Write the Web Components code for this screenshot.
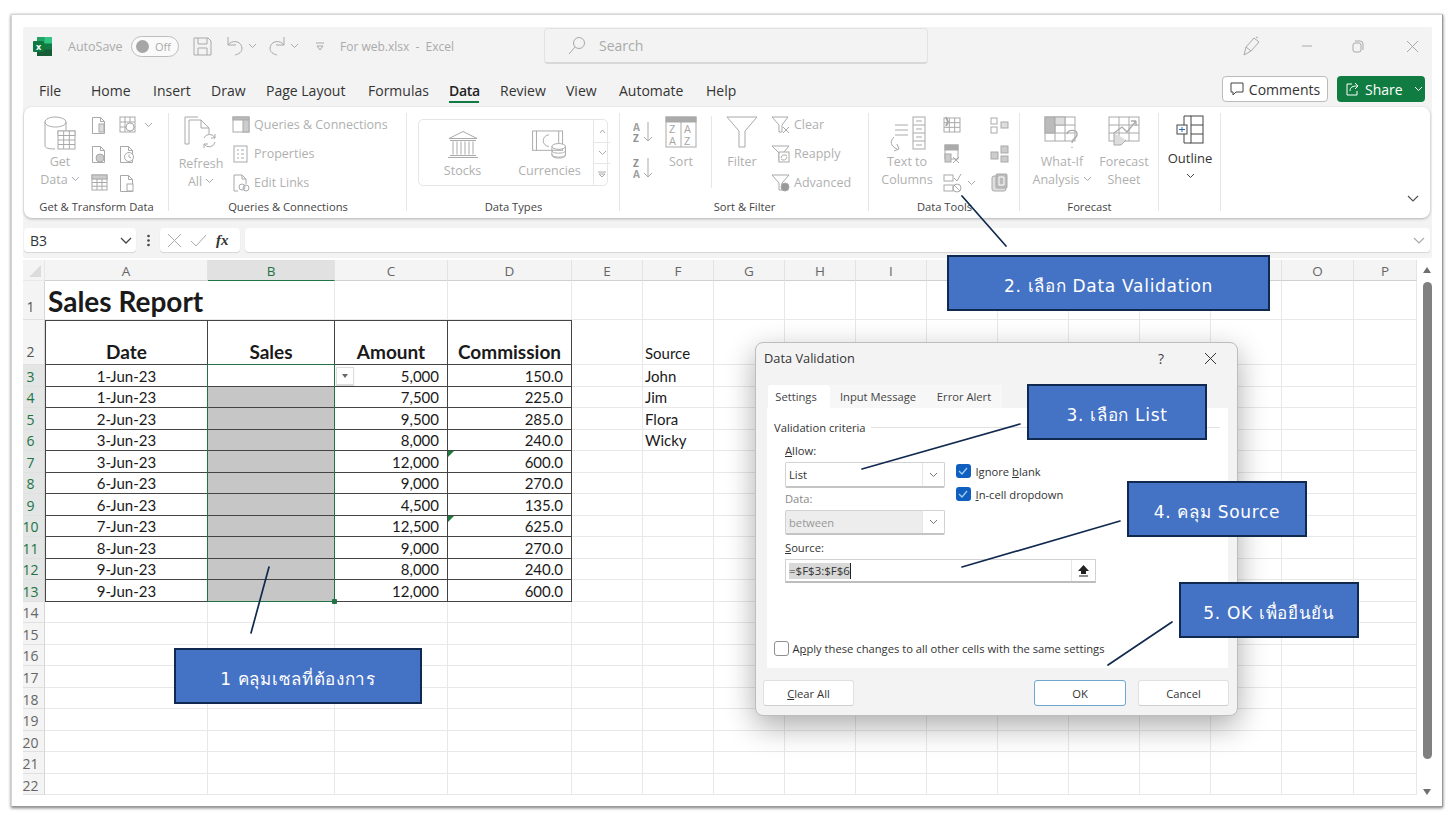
<!DOCTYPE html>
<html lang="th"><head><meta charset="utf-8"><title>Data Validation</title>
<style>
html,body{margin:0;padding:0;background:#fff;overflow:hidden;height:817px}
body{font-family:"Open Sans","Noto Sans",sans-serif;padding:14px 8px 0 11px;box-sizing:border-box}
</style></head><body>
<x-window>
  <x-titlebar slot="title"></x-titlebar>
  <x-tabs slot="tabs"></x-tabs>
  <x-ribbon slot="ribbon"></x-ribbon>
  <x-formula slot="formula"></x-formula>
  <x-sheet slot="sheet"></x-sheet>
</x-window>
<x-dialog></x-dialog>
<x-lines></x-lines>
<x-callout style="left:174px;top:648px;width:248px;height:56px">1 คลุมเซลที่ต้องการ</x-callout>
<x-callout style="left:947px;top:255px;width:323px;height:56px">2. เลือก Data Validation</x-callout>
<x-callout style="left:1027px;top:384px;width:180px;height:56px">3. เลือก List</x-callout>
<x-callout style="left:1127px;top:481px;width:180px;height:56px">4. คลุม Source</x-callout>
<x-callout style="left:1179px;top:582px;width:180px;height:56px">5. OK เพื่อยืนยัน</x-callout>
<script>
const G='#a9a9a9';
const grid=(x,y,w,h,cols,rows,extra='')=>{let s=`<rect x="${x}" y="${y}" width="${w}" height="${h}" ${extra}/>`;
 for(let i=1;i<cols;i++){const p=x+w*i/cols;s+=`<path d="M${p} ${y}v${h}"/>`}
 for(let i=1;i<rows;i++){const p=y+h*i/rows;s+=`<path d="M${x} ${p}h${w}"/>`}return s};
const doc='<path d="M1.5 1.5h8l4 4v12h-12z"/><path d="M9.5 1.5v4h4"/>';
const lt=(x,y,t,s=10,f='#a0a0a0',w=700)=>`<text x="${x}" y="${y}" font-size="${s}" fill="${f}" stroke="none" font-family="Open Sans" font-weight="${w}">${t}</text>`;
const ICONS={
 get:[32,36,`<path d="M1 6C1 3 6 1 11 1s11 2 11 5v8M1 6c0 3 5 5 10.500 5S22 9 22 6M1 6v24c0 2 4 3 10 3"/><rect x="14" y="15" width="17" height="4" fill="#bbb"/>${grid(14,15,17,18,3,4,'fill="#fff"')}`],
 d1:[18,18,`${doc}<rect x="8" y="8" width="5" height="8" fill="#ddd"/>`],
 d2:[20,18,`${grid(1,1,15,15,3,3,'fill="#fff"')}<circle cx="11" cy="11" r="4" fill="#fff"/>`],
 d3:[18,18,`${doc}<circle cx="9" cy="13" r="4" fill="#ccc"/>`],
 d4:[18,18,`${doc}<circle cx="10" cy="12" r="4.500" fill="#fff"/><path d="M10 9.500V12l2 1"/>`],
 d5:[18,18,`${grid(1,1,15,15,3,4,'fill="#fff"')}<rect x="1" y="1" width="15" height="4" fill="#ccc"/>`],
 d6:[18,18,`${doc}<rect x="8" y="10" width="6" height="7" fill="#fff"/>`],
 refresh:[34,36,`<path d="M5 28H1V1h13"/><path d="M5 28V4h12l8 8v6"/><path d="M17 4v8h8"/><path d="M20 22a6 6 0 0 1 11 0M31 26a6 6 0 0 1-11 2"/><path d="M31 18v4h-4M20 32v-4h4"/>`],
 q:[18,18,`${grid(1,1,16,15,1,1,'fill="#fff"')}<rect x="1" y="1" width="16" height="3" fill="#bbb"/><rect x="11" y="4" width="6" height="12" fill="#ccc"/>`],
 prop:[18,18,`<rect x="2" y="1" width="13" height="16"/><path d="M5 5h2M5 9h2M5 13h2M9 5h3M9 9h3M9 13h3"/>`],
 link:[18,18,`<path d="M6 17H2V1h8l4 4v5"/><path d="M10 1v4h4"/><circle cx="10" cy="13" r="3"/><circle cx="14" cy="14" r="3"/>`],
 bank:[32,28,`<path d="M2 8L16 1l14 7z"/><path d="M3 10h26M3 25h26M1 27h30M6 11v13M10 11v13M14 11v13M18 11v13M22 11v13M26 11v13"/>`],
 cur:[38,30,`<rect x="1" y="1" width="31" height="20"/><path d="M5 1v20M28 1v20"/><path d="M18 5a6 6 0 1 0 0 12"/><ellipse cx="28" cy="17" rx="7" ry="3" fill="#fff"/><path d="M21 17v9c0 2 3 3 7 3s7-1 7-3v-9M21 21c0 2 3 3 7 3s7-1 7-3M21 25c0 2 3 3 7 3s7-1 7-3"/>`],
 az:[21,24,`${lt(0,10,'A')}${lt(0,21,'Z',10,'#909090')}<path d="M15 1v19M11 16l4 4 4-4"/>`],
 za:[21,24,`${lt(0,10,'Z',10,'#909090')}${lt(0,21,'A')}<path d="M15 1v19M11 16l4 4 4-4"/>`],
 sort:[32,32,`<rect x="1" y="1" width="30" height="30"/><rect x="1" y="1" width="30" height="5" fill="#aaa"/><path d="M16 6v25"/>${lt(4,17,'Z',11,'#a6a6a6',400)}${lt(19,17,'A',11,'#a6a6a6',400)}${lt(4,29,'A',11,'#a6a6a6',400)}${lt(19,29,'Z',11,'#a6a6a6',400)}`],
 filter:[32,32,`<path d="M1 1h30L19 15v16h-6V15z"/>`],
 clear:[20,18,`<path d="M1 1h16L11 9v7H8V9z"/><path d="M12 11l6 6M18 11l-6 6"/>`],
 reapply:[20,18,`<path d="M1 1h17L12 8h-2v8H8V8z"/><rect x="8" y="7" width="10" height="10" fill="#fff"/><path d="M10 13a3.500 3.500 0 0 1 6-2M16 12a3.500 3.500 0 0 1-6 2"/>`],
 adv:[20,18,`<path d="M1 1h17L11 9v7H8V9z"/><circle cx="14" cy="13" r="4" fill="#999"/>`],
 ttc:[37,36,`<rect x="24" y="1" width="12" height="32"/><path d="M24 9h12M24 17h12M24 25h12M27 5h6M27 13h6M27 21h6M27 29h6M6 9h13M6 14h13M6 19h13"/><path d="M5 21C1 25 1 30 8 33M8 28l2 5-5 2"/>`],
 flash:[18,18,`${grid(1,2,16,14,3,3)}<path d="M3 1l2 5-2 4" stroke-width="2"/>`],
 dup:[18,20,`<rect x="2" y="1" width="13" height="14"/><rect x="2" y="1" width="13" height="5" fill="#aaa"/><rect x="2" y="10" width="6" height="8" fill="#ccc"/><path d="M10 13l6 6M16 13l-6 6"/>`],
 valid:[19,20,`<rect x="1" y="2" width="9" height="6"/><rect x="1" y="12" width="9" height="6"/><path d="M11 5l3 3 4-7"/><circle cx="14" cy="15" r="4"/><path d="M11 12l6 6"/>`],
 cons:[19,18,`<rect x="1" y="2" width="6" height="6"/><rect x="1" y="11" width="6" height="6"/><rect x="11" y="6" width="7" height="6" fill="#ddd"/>`],
 rel:[19,18,`<rect x="1" y="7" width="7" height="7" fill="#ccc"/><rect x="11" y="1" width="7" height="7" fill="#ccc"/><rect x="11" y="11" width="7" height="6" fill="#ccc"/>`],
 mdl:[19,20,`<rect x="2" y="3" width="14" height="15" rx="2" fill="#ddd"/><rect x="6" y="1" width="11" height="14" rx="1" fill="#bbb"/><path d="M9 4h5v8H9z" stroke="#fff"/>`],
 whatif:[36,32,`${grid(1,1,30,24,3,3,'fill="#fff"')}<rect x="1" y="1" width="10" height="16" fill="#bbb"/><rect x="11" y="1" width="10" height="8" fill="#ddd"/><path d="M23 18c1-5 11-5 10 1-1 4-5 3-5 8M28 31v1" stroke-width="1.400"/>`],
 sheet:[32,30,`${grid(1,1,30,24,3,3)}<path d="M6 17l8-6 5 5 9-11M28 5h-5M28 5v5" stroke-width="1.300"/><path d="M6 17v12h7l5-5" fill="#ddd"/>`],
 outline:[28,29,`<path d="M15 1H8v27h7"/><rect x="15" y="1" width="12" height="27"/><path d="M15 10h12M15 19h12"/><rect x="1" y="10" width="10" height="9" fill="#fff"/><path d="M3 14.500h6M6 12v5" stroke="#2b6cb0"/>`],
 chev:[9,6,`<path d="M1 1l3.500 3.500L8 1"/>`],
 save:[19,19,`<path d="M1 1h14l3 3v14H1z"/><path d="M5 1v6h9V1M5 18v-7h9v7"/>`],
 undo:[19,20,`<path d="M3 1v8h8"/><path d="M3 9c3-5 13-5 14 3 0 4-3 6-7 7"/>`],
 redo:[19,20,`<path d="M16 1v8H8"/><path d="M16 9C13 4 3 4 2 12c0 4 3 6 7 7"/>`],
 qat:[8,9,`<path d="M0 1h8M1 4h6L4 8z" />`],
 search:[18,19,`<circle cx="11" cy="7" r="5.500"/><path d="M7 11l-6 7"/>`],
 pen:[18,20,`<path d="M1 19l2-8L11 2l5 4-8 9z"/><path d="M13 1l2 1M3 11l5 4"/>`],
 min:[10,2,`<path d="M0 1h10"/>`],
 rest:[12,13,`<rect x="1" y="3" width="8" height="9" rx="2"/><path d="M3 1h5a3 3 0 0 1 3 3v6"/>`],
 x:[13,13,`<path d="M1 1l11 11M12 1L1 12"/>`],
 comment:[14,14,`<path d="M1 1h12v9H6l-3 3v-3H1z"/>`],
 share:[15,15,`<path d="M7 2H2v11h10V9"/><path d="M5 9c0-4 3-5 7-5M10 1l3 3-3 3"/>`]
};
const icon=(n,c)=>{const [w,h,b]=ICONS[n];return `<svg part="i" width="${w}" height="${h}" viewBox="0 0 ${w} ${h}" fill="none" stroke="${c||G}" stroke-width="1" style="display:block;flex:none">${b}</svg>`};

function def(name,html,init){customElements.define(name,class extends HTMLElement{
  connectedCallback(){ if(this.shadowRoot)return; const r=this.attachShadow({mode:'open'}); r.innerHTML=typeof html==='function'?html(this):html; if(init)init(r,this);} });}

def('x-window',`<style>
:host{display:block;width:1432px;height:793px;box-sizing:border-box;background:#fff;border:1px solid #d6d6d6;border-bottom-color:#999;border-right-color:#999;box-shadow:0 1px 3px rgba(0,0,0,.55);padding:12px 10px 0 11px}
.top{background:#f3f3f3;height:231px;display:block;width:1409px;border-radius:2px}
</style><div class="top"><slot name="title"></slot><slot name="tabs"></slot><slot name="ribbon"></slot><slot name="formula"></slot></div><slot name="sheet"></slot>`);

def('x-titlebar',()=>`<style>
:host{display:flex;align-items:center;height:45px;color:#aaa;font-size:12.500px;box-sizing:border-box;padding-bottom:7px}
.logo{margin-left:10px;width:19px;height:19px;position:relative;flex:none}
.lx{position:absolute;left:0;top:4px;width:11px;height:11px;background:#0e7a3f;border-radius:1px;color:#fff;font:700 9px/11px "Open Sans";text-align:center;z-index:1}
.auto{margin-left:16px;width:63px;flex:none}
.tg{height:21px;border:1px solid #bdbdbd;border-radius:11px;display:flex;align-items:center;gap:6px;padding-left:4px;box-sizing:border-box;width:48px;background:#fafafa;font-size:11px;flex:none}
.kn{width:13px;height:13px;border-radius:50%;background:#a6a6a6;flex:none}
.m{display:flex;flex:none}
.file{width:204px;flex:none;font-size:12px}
.search{width:384px;height:36px;box-sizing:border-box;border:1px solid #e2e2e2;border-bottom:2px solid #d8d8d8;border-radius:4px;display:flex;align-items:center;padding-left:23px;gap:13px;flex:none;font-size:14px;background:#f3f3f3}
</style>
<div class="logo"><div class="lx">x</div><svg width="19" height="19" viewBox="0 0 19 19" style="display:block"><rect x="4" y="0" width="15" height="6.500" fill="#21a366"/><rect x="4" y="6" width="15" height="7" fill="#107c41"/><rect x="4" y="12.500" width="15" height="6.500" fill="#185c37"/><rect x="11.500" y="0" width="7.500" height="6.500" fill="#33c481"/></svg></div>
<div class="auto">AutoSave</div><div class="tg"><div class="kn"></div>Off</div>
<div class="m" style="margin-left:14px">${icon('save')}</div>
<div class="m" style="margin-left:13px">${icon('undo')}</div>
<div class="m" style="margin-left:4px;align-items:center">${icon('chev')}</div>
<div class="m" style="margin-left:11px">${icon('redo')}</div>
<div class="m" style="margin-left:3px;align-items:center">${icon('chev')}</div>
<div class="m" style="margin-left:17px;align-items:center">${icon('qat')}</div>
<div class="file" style="margin-left:16px">For web.xlsx&nbsp; -&nbsp; Excel</div>
<div class="search">${icon('search')}<span>Search</span></div>
<div class="m" style="margin-left:315px">${icon('pen')}</div>
<div class="m" style="margin-left:41px">${icon('min')}</div>
<div class="m" style="margin-left:40px">${icon('rest')}</div>
<div class="m" style="margin-left:42px">${icon('x')}</div>`);

def('x-tabs',()=>`<style>
:host{display:flex;align-items:flex-start;height:35px;box-sizing:border-box;position:relative}
.g{display:grid;grid-template-columns:52px 62px 58px 55px 102px 81px 51px 66px 53px 87px 40px;padding-left:16px;font-size:14px;color:#333;padding-top:9px;width:1199px;box-sizing:border-box;flex:none}
.on{position:relative;width:30px;color:#222;font-weight:600;letter-spacing:-.3px}
.on::after{content:"";position:absolute;left:0;right:0;top:20px;height:2px;background:#107c41}
.c{margin-top:4px;width:106px;height:26px;box-sizing:border-box;border:1px solid #bbb;border-radius:4px;background:#fff;display:flex;align-items:center;justify-content:center;gap:5px;font-size:14px;color:#333;flex:none}
.s{margin:4px 0 0 9px;width:88px;height:26px;box-sizing:border-box;border-radius:4px;background:#107c41;display:flex;align-items:center;color:#fff;font-size:14px;padding-left:8px;gap:5px;flex:none}
</style><div class="g"><span>File</span><span>Home</span><span>Insert</span><span>Draw</span><span>Page Layout</span><span>Formulas</span><span class="on">Data</span><span>Review</span><span>View</span><span>Automate</span><span>Help</span></div>
<div class="c">${icon('comment','#444')}Comments</div><div class="s">${icon('share','#fff')}Share<span style="margin-left:6px">${icon('chev','#fff')}</span></div>`);

const big=(ic,lines,w,ml,gap)=>`<div class="big" style="width:${w}px;margin-left:${ml}px"><div class="ib" ${gap?`style="height:${gap}px"`:''}>${icon(ic)}</div>${lines.map(l=>`<div class="ln">${l}</div>`).join('')}</div>`;
const ch=`<span class="ch">${icon('chev').replace('display:block','display:inline-block')}</span>`;
const row=(ic,t,gap)=>`<div class="row" style="gap:${gap}px">${icon(ic)}<span>${t}</span></div>`;
def('x-ribbon',()=>`<style>
:host{display:flex;height:111px;width:1406px;margin-left:1px;background:#fff;border-radius:8px;box-shadow:0 1px 3px rgba(0,0,0,.28);box-sizing:border-box;font-size:12.500px;color:#b0b0b0;position:relative;line-height:18px}
.grp{display:flex;flex-direction:column;flex:none;height:111px;box-sizing:border-box;position:relative}
.grp::after{content:"";position:absolute;right:0;top:6px;height:98px;width:1px;background:#e6e6e6}
.body{height:88px;padding-top:3px;display:flex;flex:none;box-sizing:content-box}
.lb{text-align:center;color:#444;font-size:11.200px;height:18px;line-height:18px;margin-top:0;white-space:nowrap}
.big{text-align:center;flex:none;padding-top:6px;white-space:nowrap}
.ln{height:18px;line-height:18px;overflow:visible}
.ib{height:37px;display:flex;justify-content:center;align-items:flex-start}
.ch{display:inline-block;margin-left:3px;line-height:0;vertical-align:2px}
.gr{display:grid;grid-auto-rows:29px;align-items:center;flex:none;justify-items:start}
.row{display:flex;align-items:center;height:29px;white-space:nowrap;flex:none}
.col{display:flex;flex-direction:column;flex:none}
.gal{margin:9px 0 0 11px;width:190px;height:67px;box-sizing:border-box;border:1px solid #e6e6e6;border-radius:5px;display:flex;position:relative;flex:none}
.gi{width:87px;text-align:center;display:flex;flex-direction:column;align-items:center;padding-top:10px;flex:none}
.gi svg{height:29px}
.gi span{margin-top:3px}
.sc{margin-left:auto;width:16px;border-left:1px solid #e6e6e6;display:grid;grid-template-rows:23px 21px 1fr;flex:none}
.sc div{display:flex;align-items:center;justify-content:center;border-bottom:1px solid #e6e6e6}
.sc div:last-child{border:0}
.vs{width:1px;background:#e6e6e6;height:72px;margin:6px 0 0 12px;flex:none}
.end{margin-left:auto;align-self:flex-end;padding:0 11px 11px 0}
</style>
<div class="grp" style="width:145px"><div class="body">
 ${big('get',['Get','Data'+ch],50,11)}
 <div class="gr" style="grid-template-columns:20px 30px;margin-left:6px;column-gap:8px;padding-top:0">
 ${icon('d1')}<div style="display:flex;align-items:center;gap:5px">${icon('d2')}${icon('chev')}</div>${icon('d3')}${icon('d4')}${icon('d5')}${icon('d6')}</div>
</div><div class="lb">Get &amp; Transform Data</div></div>

<div class="grp" style="width:238px"><div class="body">
 ${big('refresh',['Refresh','All'+ch],50,7,39)}
 <div class="col" style="margin-left:6px">${row('q','Queries &amp; Connections',4)}${row('prop','Properties',4)}${row('link','Edit Links',4)}</div>
</div><div class="lb">Queries &amp; Connections</div></div>

<div class="grp" style="width:213px"><div class="body"><div class="gal">
 <div class="gi" style="margin-left:0">${icon('bank')}<span>Stocks</span></div>
 <div class="gi">${icon('cur')}<span>Currencies</span></div>
 <div class="sc"><div>${`<svg width="7" height="5" viewBox="0 0 7 5" fill="none" stroke="#aaa"><path d="M1 4l2.500-3L6 4"/></svg>`}</div><div>${icon('chev')}</div><div><svg width="8" height="7" viewBox="0 0 8 7" fill="none" stroke="#aaa"><path d="M0 1h8M1 3h6L4 6z"/></svg></div></div>
</div></div><div class="lb">Data Types</div></div>

<div class="grp" style="width:249px"><div class="body">
 <div class="col" style="margin-left:13px;padding-top:11px;gap:12px">${icon('az')}${icon('za')}</div>
 ${big('sort',['Sort'],36,9)}
 <div class="vs"></div>
 ${big('filter',['Filter'],36,12)}
 <div class="col" style="margin-left:11px">${row('clear','Clear',3)}${row('reapply','Reapply',3)}${row('adv','Advanced',3)}</div>
</div><div class="lb">Sort &amp; Filter</div></div>

<div class="grp" style="width:151px"><div class="body">
 ${big('ttc',['Text to','Columns'],52,12)}
 <div class="gr" style="grid-template-columns:18px 29px 18px;margin-left:10px">
 ${icon('flash')}<i></i>${icon('cons')}
 ${icon('dup')}<i></i>${icon('rel')}
 ${icon('valid')}<span style="margin-left:6px">${icon('chev')}</span>${icon('mdl')}</div>
</div><div class="lb">Data Tools</div></div>

<div class="grp" style="width:139px"><div class="body">
 ${big('whatif',['What-If','Analysis'+ch],62,11)}
 ${big('sheet',['Forecast','Sheet'],50,6)}
</div><div class="lb">Forecast</div></div>

<div class="grp" style="width:62px"><div class="body">
 <div class="big" style="width:60px;margin-left:1px;color:#333;padding-top:5px;font-size:13px"><div class="ib" style="height:34px">${icon('outline','#444')}</div><div>Outline</div><div style="display:flex;justify-content:center;padding-top:6px">${icon('chev','#444')}</div></div>
</div><div class="lb"></div></div>
<div class="end">${`<svg width="12" height="7" viewBox="0 0 12 7" fill="none" stroke="#555" stroke-width="1.200"><path d="M1 1l5 5 5-5"/></svg>`}</div>`);

def('x-formula',()=>`<style>
:host{display:flex;height:24px;margin-top:10px;width:1406px;margin-left:1px;gap:0;color:#333;font-size:14px;align-items:stretch}
.box{background:#fff;border-radius:4px;box-shadow:0 1px 1px rgba(0,0,0,.12);display:flex;align-items:center;box-sizing:border-box;flex:none}
.nm{width:112px;padding:0 4px 0 6px;justify-content:space-between}
.dots{width:24px;display:flex;justify-content:center;align-items:center;flex:none}
.fx{width:80px;padding-left:7px;gap:8px}
.fi{font:italic 700 15px "Liberation Serif",serif;color:#333;margin-left:1px}
.inp{width:1185px;margin-left:5px;justify-content:flex-end;padding-right:5px}
</style>
<div class="box nm"><span>B3</span><svg width="12" height="7" viewBox="0 0 12 7" fill="none" stroke="#444" stroke-width="1.300"><path d="M1 1l5 5 5-5"/></svg></div>
<div class="dots"><svg width="3" height="13" viewBox="0 0 3 13" fill="#444"><circle cx="1.500" cy="2" r="1.300"/><circle cx="1.500" cy="6.500" r="1.300"/><circle cx="1.500" cy="11" r="1.300"/></svg></div>
<div class="box fx"><svg width="15" height="15" viewBox="0 0 15 15" fill="none" stroke="#aaa"><path d="M1 1l13 13M14 1L1 14"/></svg><svg width="17" height="13" viewBox="0 0 17 13" fill="none" stroke="#aaa"><path d="M1 7l5 5L16 1"/></svg><span class="fi">fx</span></div>
<div class="box inp"><svg width="12" height="7" viewBox="0 0 12 7" fill="none" stroke="#aaa" stroke-width="1.200"><path d="M1 1l5 5 5-5"/></svg></div>`);

const COLW=[22,163,127,113,124,71,71,71,71,71,71,71,71,71,71,72,63];
const DATA=[['1-Jun-23','5,000','150.0','John'],['1-Jun-23','7,500','225.0','Jim'],['2-Jun-23','9,500','285.0','Flora'],['3-Jun-23','8,000','240.0','Wicky'],['3-Jun-23','12,000','600.0'],['6-Jun-23','9,000','270.0'],['6-Jun-23','4,500','135.0'],['7-Jun-23','12,500','625.0'],['8-Jun-23','9,000','270.0'],['9-Jun-23','8,000','240.0'],['9-Jun-23','12,000','600.0']];
def('x-sheet',()=>`<style>
:host{display:flex;margin-top:2px;height:539px;width:1409px;position:relative;background:#fff;isolation:isolate}
.g{display:grid;grid-template-columns:${COLW.map(v=>v+'px').join(' ')};grid-template-rows:21px 38.500px 45.500px repeat(20,21.520px);font:15px/1 Lato,"Open Sans",sans-serif;color:#1a1a1a;flex:none;position:relative}
.g>div{box-sizing:border-box;border-right:1px solid #e8e8e8;border-bottom:1px solid #e8e8e8;display:flex;align-items:center;padding:2px 2px 0;white-space:nowrap;min-width:0}
.g>.ch,.g>.rh{font:13.500px "Open Sans",sans-serif;color:#666;background:#f4f4f4;justify-content:center}
.g>.ch{border-bottom:1px solid #d0d0d0;border-right:1px solid #e3e3e3;padding-top:2px}
.g>.rh{padding:2px 6px 0 0;border-right:1px solid #d6d6d6;border-bottom-color:#e0e0e0;font-size:14px}
.g>.rh.b{align-items:flex-end;padding-bottom:3px;color:#555}
.g>.rh.sel{background:#e3e6e4;color:#217346}
.g>.ch.sel{background:#e1e1e1;color:#217346;border-bottom:1.500px solid #217346}
.g>.corner{background:#f4f4f4;position:relative}
.corner::after{content:"";position:absolute;right:3px;bottom:3px;border:0 solid transparent;border-width:0 0 12px 12px;border-bottom-color:#dcdcdc}
.g>.t{border-right:1px solid #444;border-bottom:1px solid #444}
.g>.l{border-left:1px solid #444}
.g>.top{border-top:1px solid #444}
.g>.c{justify-content:center}.g>.r{justify-content:flex-end;padding-right:8px}
.g>.hd{font-weight:700;font-size:19px;align-items:flex-end;justify-content:center;padding-bottom:3px}
.g>.title{font-weight:700;font-size:28px;padding-left:3px;border-right:0}
.g>.gray{background:#c6c6c6}
.tri::before{content:"";position:absolute;left:0;top:0;border:0 solid transparent;border-width:6px 6px 0 0;border-top-color:#1a7a3a}
.tri{position:relative}
.dd{position:relative}
.dd i{position:absolute;left:1px;top:2px;width:18px;height:18px;box-sizing:border-box;background:#fff;border:1px solid #ddd;box-shadow:0 1px 1px rgba(0,0,0,.15);display:flex;align-items:center;justify-content:center}
.dd i::after{content:"";border:3.500px solid transparent;border-top:4px solid #666;border-bottom:0}
.g>.selbox{position:absolute;grid-column:3/4;grid-row:4/15;left:-1px;top:-1px;right:0;bottom:0;border:1px solid #217346;border-right-width:1.500px;border-bottom-width:1.500px;pointer-events:none;z-index:2;padding:0}
.selbox::after{content:"";position:absolute;right:-3px;bottom:-3px;width:5px;height:5px;background:#217346;border-radius:1px}
.sb{width:24px;position:relative;flex:none}
.th{position:absolute;left:6px;top:22px;width:9px;height:477px;border-radius:5px;background:#808080}
.u,.d{position:absolute;left:6px;border:4.500px solid transparent}
.u{top:7px;border-bottom:6px solid #6f6f6f;border-top:0}
.d{top:529px;border-top:6px solid #6f6f6f;border-bottom:0}
</style><div class="g" id="g"></div><div class="sb"><div class="u"></div><div class="th"></div><div class="d"></div></div>`,
(r)=>{const g=r.getElementById('g');let h='<div class="corner"></div>';
 'ABCDEFGHIJKLMNOP'.split('').forEach(c=>{h+=`<div class="ch${c==='B'?' sel':''}">${'JKLMN'.includes(c)?'':c}</div>`});
 const blanks=n=>{let s='';for(let i=0;i<n;i++)s+='<div></div>';return s};
 for(let rr=1;rr<=22;rr++){
  const sel=rr>=3&&rr<=13;h+=`<div class="rh${rr<=2?' b':''}${sel?' sel':''}">${rr}</div>`;
  if(rr===1){h+='<div class="title">Sales Report</div>'+blanks(15)}
  else if(rr===2){h+=['Date','Sales','Amount','Commission'].map((t,i)=>`<div class="t top hd${i?'':' l'}">${t}</div>`).join('');
    h+=blanks(1)+`<div style="align-items:flex-end;padding-bottom:3px">Source</div>`+blanks(10)}
  else if(sel){const d=DATA[rr-3];
    h+=`<div class="t l c">${d[0]}</div><div class="t ${rr>3?'gray':''}"></div><div class="t r ${rr===3?'dd':''}">${rr===3?'<i></i>':''}${d[1]}</div><div class="t r ${rr===7||rr===10?'tri':''}">${d[2]}</div>`;
    h+=blanks(1)+`<div>${d[3]||''}</div>`+blanks(10)}
  else h+=blanks(16);
 }
 h+='<div class="selbox"></div>';
 g.innerHTML=h;
});

const cb=(t)=>`<span class="cb">${t?'<svg width="10" height="8" viewBox="0 0 10 8" fill="none" stroke="#9fd0f5" stroke-width="1.300"><path d="M1 4l3 3 5-6"/></svg>':''}</span>`;
def('x-dialog',()=>`<style>
:host{position:absolute;left:755px;top:342px;width:483px;height:374px;box-sizing:border-box;background:#f3f3f3;border:1px solid #bdbdbd;border-radius:8px;box-shadow:0 10px 30px rgba(0,0,0,.33);font-size:11.200px;color:#333;display:block}
.hd{height:30px;display:flex;align-items:center;padding:0 20px 0 8px;font-size:12.800px}
.hd .q{margin-left:auto;font-size:14px;margin-right:40px;color:#444}
.tabs{display:flex;margin:12px 0 0 12px;height:23px}
.tabs div{display:flex;align-items:center;box-sizing:border-box;justify-content:center;background:#f7f7f7;flex:none;color:#444}
.tabs div:first-child{background:#fff;border-radius:3px 3px 0 0;padding-right:6px}
.panel{margin:0 9px 0 11px;background:#fff;height:260px;box-sizing:border-box;padding:10px 8px 0 7px}
.lg{display:flex;align-items:center;gap:5px;height:18px}
.lg i{flex:1;height:1px;background:#e3e3e3}
.f{padding-left:11px}
.lbl{height:18px;line-height:18px}
u{text-underline-offset:1px}
.two{display:flex;margin-top:6px}
.sel{width:160px;height:26px;box-sizing:border-box;border:1px solid #d2d2d2;border-bottom:2px solid #c4c4c4;border-radius:2px;display:flex;align-items:center;padding-left:3px;margin-top:2px;position:relative;background:#fff}
.sel b{position:absolute;right:0;top:0;bottom:0;width:21px;border-left:1px solid #e6e6e6;display:flex;align-items:center;justify-content:center;background:#fff}
.dis{background:#ededed;color:#999;height:25px}
.rt{margin-left:11px;padding-top:22px}
.cr{display:flex;align-items:center;gap:5px;height:14px;margin-bottom:9px}
.cb{width:14.500px;height:14.500px;border-radius:3px;background:#0f5fc0;display:flex;align-items:center;justify-content:center;flex:none;box-sizing:border-box}
.cb.off{background:#fff;border:1px solid #8f8f8f}
.inp{width:311px;height:24px;box-sizing:border-box;border:1px solid #d2d2d2;border-bottom:2px solid #bdbdbd;display:flex;align-items:center;padding-left:3px;position:relative;margin-top:2px;background:#fff}
.inp span{background:#d9d9d9;line-height:16px;border-right:1px solid #222;font-size:11.500px}
.inp b{position:absolute;right:0;top:0;bottom:0;width:23px;border-left:1px solid #e6e6e6;display:flex;align-items:center;justify-content:center;background:#fff}
.ap{display:flex;align-items:center;gap:4px;margin-top:58px;height:15px}
.btns{display:flex;padding:12px 8px 0 7px;gap:12px}
.btn{width:91px;height:26px;box-sizing:border-box;background:#fff;border:1px solid #e0e0e0;border-bottom:1px solid #cfcfcf;border-radius:3px;display:flex;align-items:center;justify-content:center;flex:none;color:#333}
.ok{border:1.500px solid #6ea7cf;width:92px}
</style>
<div class="hd">Data Validation<span class="q">?</span>${icon('x','#333')}</div>
<div class="tabs"><div style="width:62px">Settings</div><div style="width:96px">Input Message</div><div style="width:76px">Error Alert</div></div>
<div class="panel">
 <div class="lg">Validation criteria<i></i></div>
 <div class="f">
  <div class="two"><div>
   <div class="lbl"><u>A</u>llow:</div>
   <div class="sel">List<b>${icon('chev','#777')}</b></div>
   <div class="lbl" style="margin-top:2px;color:#888">Data:</div>
   <div class="sel dis" style="margin-top:2px">between<b>${icon('chev','#777')}</b></div>
  </div>
  <div class="rt"><div class="cr">${cb(1)}<span>Ignore <u>b</u>lank</span></div><div class="cr">${cb(1)}<span><u>I</u>n-cell dropdown</span></div></div></div>
  <div class="lbl" style="margin-top:4px"><u>S</u>ource:</div>
  <div class="inp"><span>=$F$3:$F$6</span><b><svg width="11" height="13" viewBox="0 0 11 13" fill="#222"><path d="M5.500 1L11 7H8v3H3V7H0zM1 11.500h9v1H1z"/></svg></b></div>
 </div>
 <div class="ap"><span class="cb off"></span><span>A<u>p</u>ply these changes to all other cells with the same settings</span></div>
</div>
<div class="btns"><div class="btn"><span><u>C</u>lear All</span></div><div class="btn ok" style="margin-left:auto">OK</div><div class="btn">Cancel</div></div>`);

def('x-callout',`<style>
:host{position:absolute;box-sizing:border-box;background:#4472c4;border:2px solid #10294f;color:#fff;display:flex;align-items:center;justify-content:center;font:17px "DejaVu Sans","Noto Sans",sans-serif;letter-spacing:.7px;white-space:pre;padding-top:5px}
</style><slot></slot>`);

def('x-lines',`<style>:host{position:absolute;left:0;top:0;width:1452px;height:817px;pointer-events:none;display:block}svg{display:block}</style>
<svg width="1452" height="817" fill="none" stroke="#10294f" stroke-width="1.700" stroke-linecap="round">
<path d="M269 567L251 633"/><path d="M962 196L1006 246"/><path d="M862 469L1020 424"/><path d="M962 567L1120 521"/><path d="M1108 665L1172 622"/></svg>`);
</script></body></html>
